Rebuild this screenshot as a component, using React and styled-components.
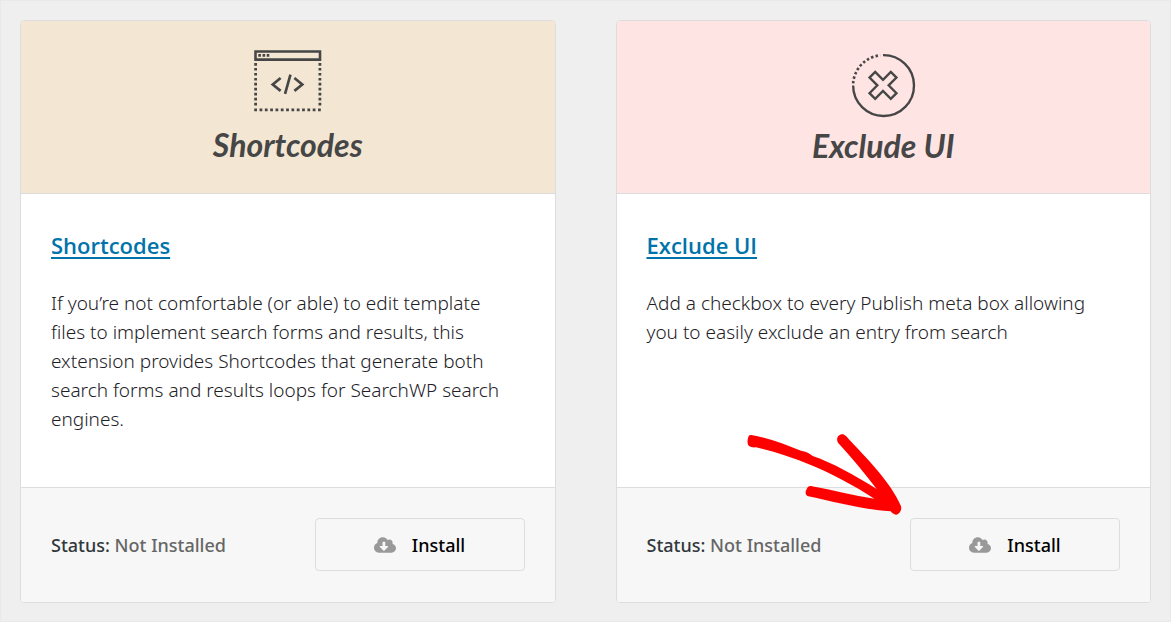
import styled, { createGlobalStyle } from 'styled-components';
import { FaCloudDownloadAlt } from 'react-icons/fa';

const GlobalStyle = createGlobalStyle`
  * {
    box-sizing: border-box;
  }

  body {
    margin: 0;
    background: #efefef;
    color: #32373c;
    font-family: "Noto Sans", "Open Sans", sans-serif;
    font-size: 18px;
  }
`;

const Page = styled.main`
  display: grid;
  grid-template-columns: repeat(2, minmax(0, 1fr));
  gap: 60px;
  min-height: 100vh;
  padding: 19px 19px 18px;
  border: 1px solid #e9e9e9;
`;

const Card = styled.article`
  display: flex;
  flex-direction: column;
  background: #fff;
  border: 1px solid #ddd;
  border-radius: 4px;
`;

const Banner = styled.header`
  display: flex;
  flex-direction: column;
  align-items: center;
  padding: 28px 20px;
  height: 173px;
  color: #464646;
  background: ${({ $color }) => $color};
  border-bottom: 1px solid #ddd;
  border-radius: 3px 3px 0 0;
`;

const BannerTitle = styled.div`
  margin-top: 12px;
  font-family: Lato, "Open Sans", sans-serif;
  font-size: 32px;
  font-style: italic;
  font-weight: 700;
  line-height: 40px;
`;

const Body = styled.div`
  flex: 1;
  padding: 35px 44px 48px 30px;
`;

const Title = styled.h2`
  margin: 0 0 28px;
  font-family: "Open Sans", "Noto Sans", sans-serif;
  font-size: 22px;
  font-weight: 600;
  line-height: 32px;
`;

const TitleLink = styled.a`
  color: #0073aa;
  text-decoration: underline;
  text-decoration-thickness: 2px;
  text-underline-offset: 3px;
`;

const Description = styled.p`
  margin: 0;
  color: #1d2126;
  font-size: 19px;
  font-weight: 300;
  line-height: 29px;
`;

const Footer = styled.footer`
  display: flex;
  align-items: center;
  justify-content: space-between;
  padding: 30px 30px 31px;
  background: #f7f7f7;
  border-top: 1px solid #ddd;
  border-radius: 0 0 3px 3px;
`;

const Status = styled.div`
  color: #666;
  font-weight: 500;
  line-height: 28px;
`;

const StatusLabel = styled.strong`
  color: #32373c;
  font-weight: 500;
`;

const InstallWrapper = styled.div`
  position: relative;
`;

const InstallButton = styled.button`
  display: flex;
  align-items: center;
  justify-content: center;
  gap: 16px;
  width: 210px;
  height: 53px;
  padding: 0;
  background: #f7f7f7;
  border: 1px solid #ddd;
  border-radius: 4px;
  color: #000;
  font-family: inherit;
  font-size: 18px;
  font-weight: 500;
  cursor: pointer;

  svg {
    color: #999;
  }
`;

const Arrow = styled.svg`
  position: absolute;
  top: -93px;
  left: -170px;
  width: 180px;
  height: 100px;
  pointer-events: none;
`;

const CodeIcon = () => (
  <svg width="70" height="65" viewBox="0 0 70 65" fill="none" stroke="currentColor" aria-hidden="true">
    <path d="M2 2.500H67.500V10.800H2Z" strokeWidth="2.600" />
    <path d="M4.800 6.500H16" strokeWidth="2.800" strokeDasharray="2.700 1.600" />
    <path d="M2.100 14.200V58" strokeWidth="2.800" strokeDasharray="2.700 2.350" />
    <path d="M67.400 14.200V58" strokeWidth="2.800" strokeDasharray="2.700 2.350" />
    <path d="M0.700 61.800H69" strokeWidth="2.800" strokeDasharray="2.800 2.600" />
    <path d="M27.500 29.500L19.500 36L27.500 42.500M41.500 29.500L49.500 36L41.500 42.500M37.500 26L32 45.500" strokeWidth="2.700" />
  </svg>
);

const ExcludeIcon = () => (
  <svg width="66" height="65" viewBox="0 0 66 69" fill="none" stroke="currentColor" aria-hidden="true" overflow="visible">
    <g transform="translate(0 3)">
      <path d="M33 3.500A32.300 32.300 0 1 1 1.300 35.800" strokeWidth="2.500" />
      <path d="M1.300 33.500A32.300 32.300 0 0 1 30 3.700" strokeWidth="2.800" strokeDasharray="2.600 2.350" />
      <path
        d="M24.700 21.300L33 29.600L41.300 21.300L47.300 27.300L39 35.600L47.300 43.900L41.300 49.900L33 41.600L24.700 49.900L18.700 43.900L27 35.600L18.700 27.300Z"
        strokeWidth="2.500"
      />
    </g>
  </svg>
);

const PointerArrow = () => (
  <Arrow viewBox="0 0 540 300" fill="#f00" aria-hidden="true">
    <path d="M34 30C85 39 135 58 183 77C197 79 207 84 218 93C279 114 343 150 410 192C374 144 335 97 294 53C286 39 297 25 310 28L318 33C374 94 454 172 483 244C486 256 478 268 468 269C462 269 456 264 452 259C369 254 286 231 205 214C195 211 195 199 200 193C203 184 208 182 216 184C278 195 340 212 403 221C340 181 282 149 214 121C158 97 104 80 48 67C38 68 28 66 24 59C21 50 23 38 28 31Z" />
  </Arrow>
);

const extensions = [
  {
    name: 'Shortcodes',
    color: '#f3e6d3',
    Icon: CodeIcon,
    description:
      'If you’re not comfortable (or able) to edit template files to implement search forms and results, this extension provides Shortcodes that generate both search forms and results loops for SearchWP search engines.',
  },
  {
    name: 'Exclude UI',
    color: '#ffe4e4',
    Icon: ExcludeIcon,
    description: 'Add a checkbox to every Publish meta box allowing you to easily exclude an entry from search',
    highlighted: true,
  },
];

const ExtensionCard = ({ name, color, Icon, description, highlighted }) => (
  <Card>
    <Banner $color={color}>
      <Icon />
      <BannerTitle>{name}</BannerTitle>
    </Banner>
    <Body>
      <Title>
        <TitleLink href="#">{name}</TitleLink>
      </Title>
      <Description>{description}</Description>
    </Body>
    <Footer>
      <Status>
        <StatusLabel>Status:</StatusLabel> Not Installed
      </Status>
      <InstallWrapper>
        <InstallButton type="button">
          <FaCloudDownloadAlt size={22} aria-hidden="true" />
          Install
        </InstallButton>
        {highlighted && <PointerArrow />}
      </InstallWrapper>
    </Footer>
  </Card>
);

const App = () => (
  <>
    <GlobalStyle />
    <Page>
      {extensions.map((extension) => (
        <ExtensionCard key={extension.name} {...extension} />
      ))}
    </Page>
  </>
);

export default App;
